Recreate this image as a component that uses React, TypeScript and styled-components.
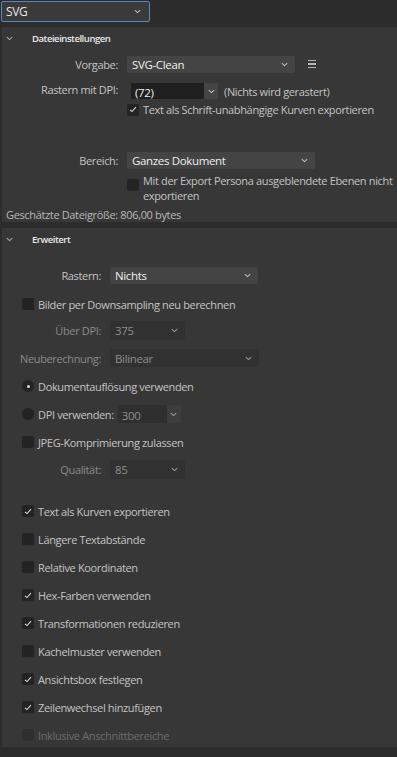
import React from 'react'
import styled, { createGlobalStyle, css } from 'styled-components'

const GlobalStyle = createGlobalStyle`
  html, body {
    margin: 0;
    padding: 0;
    background: #2c2c2c;
  }
  body {
    font-family: 'Open Sans', 'Noto Sans', sans-serif;
    font-size: 11px;
    letter-spacing: -0.35px;
    color: #cfcfcf;
  }
`

const Page = styled.div`
  width: 397px;
  height: 757px;
  display: flex;
  flex-direction: column;
  background: #2c2c2c;
  overflow: hidden;
`

const TopBar = styled.div`
  height: 27px;
  padding: 1px 0 0 1px;
  box-sizing: border-box;
`

const FormatSelect = styled.div`
  width: 149px;
  height: 21px;
  box-sizing: border-box;
  border: 1px solid #5b86bf;
  border-radius: 2px;
  background: #3a3a3a;
  display: flex;
  align-items: center;
  justify-content: space-between;
  padding: 0 8px 0 4px;
  font-size: 12px;
  color: #e6e6e6;
`

const Panel = styled.div<{ $grow?: boolean }>`
  background: #373737;
  margin-left: 2px;
  display: flex;
  flex-direction: column;
  ${(p) => p.$grow && css`flex: 1;`}
`

const Divider = styled.div<{ $h: number }>`
  height: ${(p) => p.$h}px;
  background: #2c2c2c;
`

const Header = styled.div`
  height: 22px;
  display: flex;
  align-items: center;
  padding-left: 4px;
  font-size: 9.5px;
  font-weight: 600;
  letter-spacing: -0.45px;
  color: #e8e8e8;
`

const HeaderChevron = styled.span`
  width: 26px;
  display: flex;
  align-items: center;
`

const Body = styled.div<{ $pt: number }>`
  display: flex;
  flex-direction: column;
  padding-top: ${(p) => p.$pt}px;
`

const FieldRow = styled.div<{ $labelW: number; $mt?: number; $h?: number }>`
  display: grid;
  grid-template-columns: ${(p) => p.$labelW}px auto 1fr;
  column-gap: 9px;
  align-items: center;
  height: ${(p) => p.$h ?? 18}px;
  margin-top: ${(p) => p.$mt ?? 0}px;
`

const Label = styled.span<{ $dim?: boolean; $top?: boolean }>`
  text-align: right;
  white-space: nowrap;
  color: ${(p) => (p.$dim ? '#8a8a8a' : '#c4c4c4')};
  ${(p) => p.$top && css`align-self: start; margin-top: -1px;`}
`

const Select = styled.div<{ $w: number; $h?: number; $dim?: boolean }>`
  width: ${(p) => p.$w}px;
  height: ${(p) => p.$h ?? 17}px;
  box-sizing: border-box;
  background: ${(p) => (p.$dim ? '#313131' : '#444444')};
  border-radius: 2px;
  display: flex;
  align-items: center;
  justify-content: space-between;
  padding: 0 7px 0 5px;
  color: ${(p) => (p.$dim ? '#8e8e8e' : '#eeeeee')};
  font-size: 11.5px;
`

const Combo = styled.div<{ $w: number; $h?: number; $dim?: boolean }>`
  width: ${(p) => p.$w}px;
  height: ${(p) => p.$h ?? 17}px;
  display: flex;
  margin-left: ${(p) => (p.$dim ? 0 : 4)}px;
`

const ComboInput = styled.div<{ $dim?: boolean }>`
  flex: 1;
  background: ${(p) => (p.$dim ? '#2f2f2f' : '#1f1f1f')};
  display: flex;
  align-items: center;
  padding: 2px 0 0 4px;
  box-sizing: border-box;
  color: ${(p) => (p.$dim ? '#8e8e8e' : '#eeeeee')};
  font-size: 11.5px;
`

const ComboButton = styled.div<{ $dim?: boolean }>`
  width: 14px;
  background: ${(p) => (p.$dim ? '#3d3d3d' : '#444444')};
  display: flex;
  align-items: center;
  justify-content: center;
`

const Note = styled.span`
  color: #c4c4c4;
  white-space: nowrap;
  margin-left: -3px;
`

const MenuButton = styled.span`
  display: flex;
  flex-direction: column;
  gap: 2px;
  margin-left: 4px;
  span {
    width: 8px;
    height: 1.5px;
    background: #b5b5b5;
  }
`

const CheckRow = styled.div<{ $indent: number; $mt?: number; $h?: number; $dim?: boolean }>`
  display: flex;
  align-items: center;
  gap: 4px;
  padding-left: ${(p) => p.$indent}px;
  margin-top: ${(p) => p.$mt ?? 0}px;
  height: ${(p) => p.$h ?? 16}px;
  color: ${(p) => (p.$dim ? '#6c6c6c' : '#c4c4c4')};
  white-space: nowrap;
`

const WrapCheckRow = styled(CheckRow)`
  align-items: flex-start;
  white-space: normal;
  line-height: 15px;
`

const BoxSlot = styled.span`
  margin-top: 6px;
`

const Box = styled.span<{ $dim?: boolean }>`
  flex: none;
  width: 12px;
  height: 12px;
  border-radius: 2px;
  background: ${(p) => (p.$dim ? '#2f2f2f' : '#232323')};
  display: flex;
  align-items: center;
  justify-content: center;
`

const Radio = styled.span<{ $on?: boolean }>`
  flex: none;
  width: 12px;
  height: 12px;
  border-radius: 50%;
  background: #232323;
  display: flex;
  align-items: center;
  justify-content: center;
  &::after {
    content: '';
    width: 3px;
    height: 3px;
    border-radius: 50%;
    background: ${(p) => (p.$on ? '#d8d8d8' : 'transparent')};
  }
`

const SizeLine = styled.div`
  padding: 0 0 0 4px;
  margin-top: 4px;
  color: #b8b8b8;
`

const List = styled.div`
  display: flex;
  flex-direction: column;
  gap: 12px;
  margin-top: 24px;
`

const Chevron = ({ color = '#bdbdbd' }: { color?: string }) => (
  <svg width="7" height="5" viewBox="0 0 7 5">
    <path d="M0.8 1.2 L3.5 3.6 L6.2 1.2" fill="none" stroke={color} strokeWidth="1.1" />
  </svg>
)

const Check = () => (
  <svg width="8" height="7" viewBox="0 0 8 7">
    <path d="M1 3.8 L3 5.6 L7 1.2" fill="none" stroke="#d6d6d6" strokeWidth="1.1" />
  </svg>
)

const Checkbox = ({ checked, dim }: { checked?: boolean; dim?: boolean }) => (
  <Box $dim={dim}>{checked && <Check />}</Box>
)

const options: { label: string; checked?: boolean; dim?: boolean }[] = [
  { label: 'Text als Kurven exportieren', checked: true },
  { label: 'Längere Textabstände' },
  { label: 'Relative Koordinaten' },
  { label: 'Hex-Farben verwenden', checked: true },
  { label: 'Transformationen reduzieren', checked: true },
  { label: 'Kachelmuster verwenden' },
  { label: 'Ansichtsbox festlegen', checked: true },
  { label: 'Zeilenwechsel hinzufügen', checked: true },
  { label: 'Inklusive Anschnittbereiche', dim: true },
]

const App = () => {
  return (
    <Page>
      <GlobalStyle />
      <TopBar>
        <FormatSelect>
          SVG
          <Chevron />
        </FormatSelect>
      </TopBar>

      <Panel>
        <Header>
          <HeaderChevron>
            <Chevron color="#a9a9a9" />
          </HeaderChevron>
          Dateieinstellungen
        </Header>
        <Body $pt={6}>
          <FieldRow $labelW={116}>
            <Label>Vorgabe:</Label>
            <Select $w={168}>
              SVG-Clean
              <Chevron />
            </Select>
            <MenuButton>
              <span />
              <span />
              <span />
            </MenuButton>
          </FieldRow>
          <FieldRow $labelW={116} $mt={10} $h={16}>
            <Label $top>Rastern mit DPI:</Label>
            <Combo $w={87} $h={16}>
              <ComboInput>(72)</ComboInput>
              <ComboButton>
                <Chevron />
              </ComboButton>
            </Combo>
            <Note>(Nichts wird gerastert)</Note>
          </FieldRow>
          <CheckRow $indent={125} $mt={3} $h={15}>
            <Checkbox checked />
            Text als Schrift-unabhängige Kurven exportieren
          </CheckRow>
          <FieldRow $labelW={116} $mt={35} $h={17}>
            <Label>Bereich:</Label>
            <Select $w={188}>
              Ganzes Dokument
              <Chevron />
            </Select>
          </FieldRow>
          <WrapCheckRow $indent={125} $mt={4} $h={30}>
            <BoxSlot>
              <Checkbox />
            </BoxSlot>
            Mit der Export Persona ausgeblendete Ebenen nicht exportieren
          </WrapCheckRow>
          <SizeLine>Geschätzte Dateigröße: 806,00 bytes</SizeLine>
        </Body>
      </Panel>

      <Divider $h={6} />

      <Panel $grow>
        <Header>
          <HeaderChevron>
            <Chevron color="#a9a9a9" />
          </HeaderChevron>
          Erweitert
        </Header>
        <Body $pt={17}>
          <FieldRow $labelW={99} $h={17}>
            <Label>Rastern:</Label>
            <Select $w={148}>
              Nichts
              <Chevron />
            </Select>
          </FieldRow>
          <CheckRow $indent={20} $mt={13} $h={14}>
            <Checkbox />
            Bilder per Downsampling neu berechnen
          </CheckRow>
          <FieldRow $labelW={99} $mt={10} $h={19}>
            <Label $dim>Über DPI:</Label>
            <Select $w={75} $h={19} $dim>
              375
              <Chevron color="#9a9a9a" />
            </Select>
          </FieldRow>
          <FieldRow $labelW={99} $mt={9} $h={18}>
            <Label $dim>Neuberechnung:</Label>
            <Select $w={149} $h={18} $dim>
              Bilinear
              <Chevron color="#9a9a9a" />
            </Select>
          </FieldRow>
          <CheckRow $indent={20} $mt={12} $h={14}>
            <Radio $on />
            Dokumentauflösung verwenden
          </CheckRow>
          <CheckRow $indent={20} $mt={12} $h={18}>
            <Radio />
            DPI verwenden:
            <Combo $w={63} $h={18} $dim>
              <ComboInput $dim>300</ComboInput>
              <ComboButton $dim>
                <Chevron color="#9a9a9a" />
              </ComboButton>
            </Combo>
          </CheckRow>
          <CheckRow $indent={20} $mt={12} $h={14}>
            <Checkbox />
            JPEG-Komprimierung zulassen
          </CheckRow>
          <FieldRow $labelW={99} $mt={11} $h={19}>
            <Label $dim>Qualität:</Label>
            <Select $w={75} $h={19} $dim>
              85
              <Chevron color="#9a9a9a" />
            </Select>
          </FieldRow>
          <List>
            {options.map((o) => (
              <CheckRow key={o.label} $indent={20} $h={16} $dim={o.dim}>
                <Checkbox checked={o.checked} dim={o.dim} />
                {o.label}
              </CheckRow>
            ))}
          </List>
        </Body>
      </Panel>
      <Divider $h={10} />
    </Page>
  )
}

export default App
